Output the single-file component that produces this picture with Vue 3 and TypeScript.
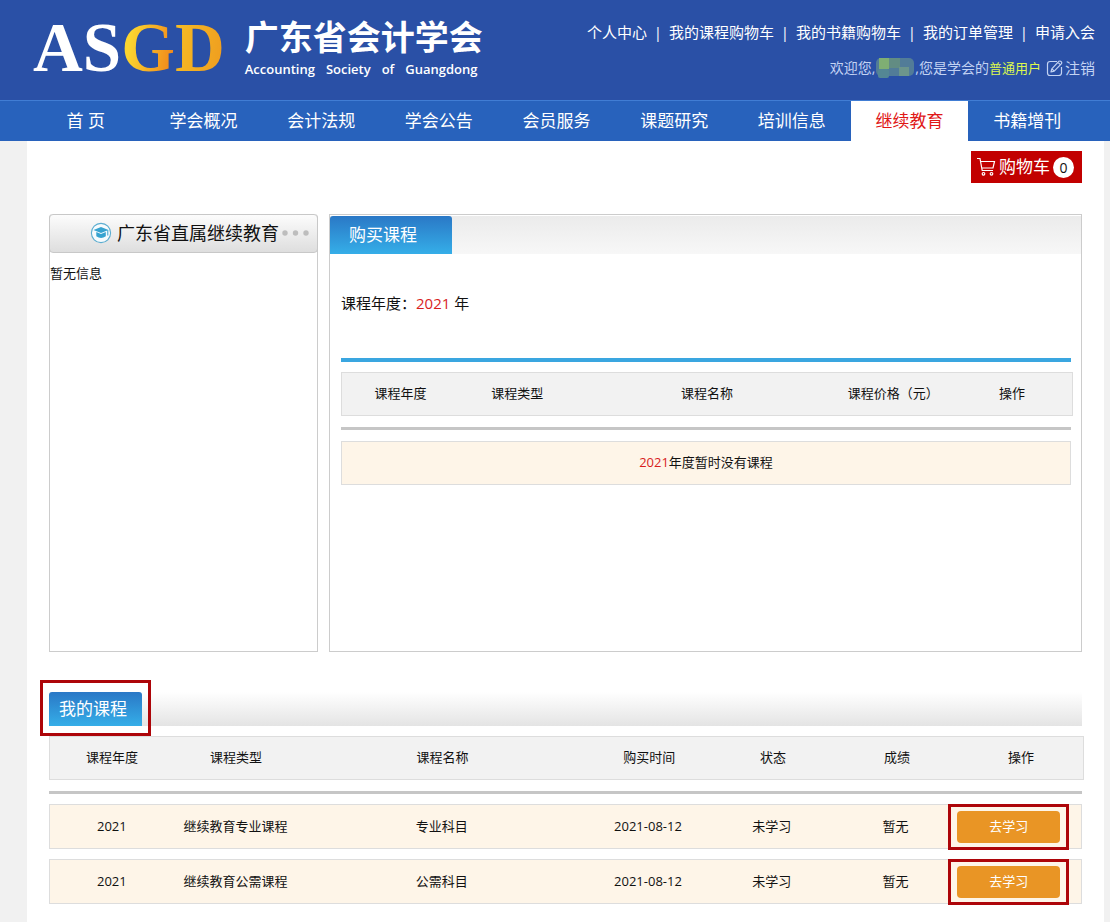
<script setup lang="ts">
interface Course {
  year: string
  type: string
  name: string
  date: string
  status: string
  score: string
}

const topLinks: string[] = ['个人中心', '我的课程购物车', '我的书籍购物车', '我的订单管理', '申请入会']
const navItems: string[] = ['首 页', '学会概况', '会计法规', '学会公告', '会员服务', '课题研究', '培训信息', '继续教育', '书籍增刊']
const activeNav = '继续教育'
const englishName: string[] = ['Accounting', 'Society', 'of', 'Guangdong']
const buyColumns: string[] = ['课程年度', '课程类型', '课程名称', '课程价格（元）', '操作']
const myColumns: string[] = ['课程年度', '课程类型', '课程名称', '购买时间', '状态', '成绩', '操作']
const courses: Course[] = [
  { year: '2021', type: '继续教育专业课程', name: '专业科目', date: '2021-08-12', status: '未学习', score: '暂无' },
  { year: '2021', type: '继续教育公需课程', name: '公需科目', date: '2021-08-12', status: '未学习', score: '暂无' },
]
</script>

<template>
  <div class="page">
    <header class="banner">
      <div class="brand">
        <div class="mark" aria-label="ASGD"><span>AS</span><span class="gold-g">G</span><span class="gold-d">D</span></div>
        <div class="names">
          <div class="cn">广东省会计学会</div>
          <div class="en"><span v-for="word in englishName" :key="word">{{ word }}</span></div>
        </div>
      </div>
      <div class="account">
        <div class="links">
          <template v-for="(link, i) in topLinks" :key="link">
            <span v-if="i > 0" class="sep">|</span>
            <a href="#">{{ link }}</a>
          </template>
        </div>
        <div class="welcome">
          <span>欢迎您,</span>
          <svg class="masked" width="40" height="20" viewBox="0 0 40 20" aria-hidden="true">
            <rect x="1" y="0" width="38" height="18" rx="5" fill="#527c98" />
            <rect x="4" y="0" width="10" height="11" fill="#7fae73" />
            <rect x="14" y="0" width="11" height="10" fill="#628c83" />
            <rect x="3" y="11" width="11" height="9" rx="2" fill="#548794" />
            <rect x="24" y="9" width="10" height="9" fill="#6c958c" />
          </svg>
          <span>,您是学会的</span><span class="level">普通用户</span>
          <a href="#" class="logout">
            <svg width="17" height="17" viewBox="0 0 17 17" fill="none" stroke="currentColor" stroke-width="1.2" stroke-linejoin="round" aria-hidden="true">
              <path d="M11 1.5H4Q1.5 1.5 1.5 4V13Q1.5 15.5 4 15.5H12.5Q15.5 15.5 15.5 13V7" />
              <path d="M5 12L5.8 8.8L13 1.2Q14.2 .6 15.2 1.7Q16.2 2.8 15.3 3.8L8.2 11.1ZM5.8 8.8L8.2 11.1M12 2.4L14.3 4.7" />
            </svg>注销</a>
        </div>
      </div>
    </header>

    <nav class="nav">
      <a v-for="item in navItems" :key="item" href="#" :class="{ active: item === activeNav }">{{ item }}</a>
    </nav>

    <main class="main">
      <button type="button" class="cart">
        <svg width="20" height="20" viewBox="0 0 20 20" fill="none" stroke="currentColor" stroke-width="1.2" aria-hidden="true">
          <path d="M1 1.5H4L6.2 13.5H17M4.6 4.5H18.5L17 11H5.7" />
          <circle cx="7.5" cy="16.8" r="1.3" />
          <circle cx="15.5" cy="16.8" r="1.3" />
        </svg>
        <span>购物车</span><span class="count">0</span>
      </button>

      <div class="panels">
        <section class="side">
          <h2 class="side-title">
            <svg width="22" height="22" viewBox="0 0 22 22" aria-hidden="true">
              <circle cx="11" cy="11" r="9.6" fill="#f7fbfd" stroke="#5badd0" stroke-width="1.1" />
              <path d="M3.5 8L11 5L18.5 8L11 11Z M6.3 10L11 12L15.8 10V14.2Q11 17.6 6.3 14.2Z" fill="#37a3d0" />
              <path d="M17.8 8V13.5" stroke="#37a3d0" stroke-width="1" />
            </svg>
            <span>广东省直属继续教育</span>
            <svg width="28" height="8" viewBox="0 0 28 8" fill="#bdbdbd" aria-hidden="true">
              <circle cx="4" cy="4" r="2.7" /><circle cx="14.5" cy="4" r="2.7" /><circle cx="25" cy="4" r="2.7" />
            </svg>
          </h2>
          <p class="side-empty">暂无信息</p>
        </section>

        <section class="buy">
          <div class="buy-bar"><h2 class="tab">购买课程</h2></div>
          <div class="buy-body">
            <p class="year">课程年度：<span class="red">2021</span> 年</p>
            <table class="grid buy-grid">
              <thead>
                <tr><th v-for="c in buyColumns" :key="c" scope="col">{{ c }}</th></tr>
              </thead>
              <tbody>
                <tr class="empty"><td colspan="5"><span class="red">2021</span>年度暂时没有课程</td></tr>
              </tbody>
            </table>
          </div>
        </section>
      </div>

      <section class="mine">
        <div class="mine-bar"><h2 class="tab marked">我的课程</h2></div>
        <table class="grid my-grid">
          <thead>
            <tr><th v-for="c in myColumns" :key="c" scope="col">{{ c }}</th></tr>
          </thead>
          <tbody>
            <tr v-for="course in courses" :key="course.type">
              <td>{{ course.year }}</td>
              <td>{{ course.type }}</td>
              <td>{{ course.name }}</td>
              <td>{{ course.date }}</td>
              <td>{{ course.status }}</td>
              <td>{{ course.score }}</td>
              <td class="action"><button type="button" class="study marked">去学习</button></td>
            </tr>
          </tbody>
        </table>
      </section>
    </main>
  </div>
</template>

<style>
body {
  background: #f1f1f1;
}
</style>

<style scoped>
.page {
  display: flex;
  flex-direction: column;
  min-height: 100vh;
  font: 13px/20px "Open Sans", "Noto Sans CJK SC", sans-serif;
  color: #111;
}
.page * {
  box-sizing: border-box;
}
h2, p {
  margin: 0;
  font-weight: 400;
}
a {
  color: inherit;
  text-decoration: none;
}
button {
  border: 0;
  padding: 0;
  font: inherit;
  cursor: pointer;
}
.red {
  color: #d81e1e;
}
.banner {
  display: flex;
  justify-content: space-between;
  height: 100px;
  padding: 0 15px 0 33px;
  background: #2a50a6;
  color: #fff;
}
.brand {
  display: flex;
  gap: 20px;
}
.mark {
  display: flex;
  margin-top: 12px;
  font: 700 69px/72px "Liberation Serif", serif;
}
.gold-g, .gold-d {
  background: linear-gradient(100deg, #fbd52f 20%, #f18a1b 85%);
  background-clip: text;
  -webkit-background-clip: text;
  color: transparent;
}
.gold-d {
  background-image: linear-gradient(100deg, #f6be25, #ee981e);
}
.names {
  padding-top: 12px;
}
.cn {
  font: 700 34px/48px "Noto Sans CJK SC", sans-serif;
}
.en {
  display: flex;
  gap: 11px;
  font-size: 13px;
  font-weight: 600;
  line-height: 18px;
}
.account {
  padding-top: 22px;
  font-size: 15px;
}
.links, .welcome {
  display: flex;
  align-items: center;
  justify-content: flex-end;
  white-space: nowrap;
}
.links {
  line-height: 20px;
}
.sep {
  width: 22px;
  text-align: center;
}
.welcome {
  margin-top: 16px;
  color: #c3d3f3;
  font-size: 14px;
}
.welcome .level {
  font-size: 13px;
  color: #dcf84e;
}
.logout {
  display: flex;
  align-items: center;
  gap: 2px;
  margin-left: 5px;
  font-size: 15px;
}
.nav {
  display: grid;
  grid-template-columns: repeat(9, 1fr);
  padding: 0 24px 0 27px;
  border-top: 1px solid #417dd4;
  background: #2862bc;
}
.nav a {
  color: #fff;
  font-size: 17px;
  line-height: 40px;
  text-align: center;
}
.nav .active {
  background: #fff;
  color: #e01818;
}
.main {
  flex: 1;
  margin: 0 6px 0 27px;
  padding: 10px 22px 18px;
  background: #fff;
}
.cart {
  display: flex;
  align-items: center;
  gap: 3px;
  height: 32px;
  margin-left: auto;
  padding: 0 8px 0 5px;
  background: #c20000;
  color: #fff;
  font-size: 17px;
}
.count {
  width: 21px;
  border-radius: 50%;
  background: #fff;
  color: #111;
  font-size: 14px;
  line-height: 21px;
}
.panels {
  display: grid;
  grid-template-columns: 269px 1fr;
  gap: 11px;
  min-height: 438px;
  margin-top: 31px;
}
.side, .buy {
  border: 1px solid #ccc;
}
.side {
  border-top: 0;
  border-radius: 4px 4px 0 0;
}
.side-title {
  display: flex;
  align-items: center;
  justify-content: flex-end;
  height: 39px;
  margin: 0 -1px;
  padding: 0 8px 1px 0;
  border: 1px solid #c8c8c8;
  border-radius: 4px;
  background: linear-gradient(#fcfcfc, #dedede);
  font-size: 18px;
}
.side-title span {
  margin: 0 2px 0 5px;
}
.side-empty {
  margin-top: 10px;
}
.buy {
  padding-top: 1px;
}
.buy-bar {
  background: linear-gradient(#ebebeb, #f7f7f7);
}
.tab {
  width: 122px;
  padding-left: 19px;
  border-radius: 3px 3px 0 0;
  background: linear-gradient(#2a78c6, #35aee8);
  color: #fff;
  font-size: 17px;
  line-height: 38px;
}
.buy-body {
  padding: 39px 10px 0 11px;
}
.year {
  padding-bottom: 45px;
  border-bottom: 4px solid #3aa6e0;
  font-size: 15px;
}
.grid {
  display: block;
  margin-top: 10px;
}
.grid thead, .grid tbody {
  display: block;
}
.grid tr {
  display: grid;
  align-items: center;
  min-height: 44px;
  border: 1px solid #ddd;
}
.grid thead tr {
  margin-right: -2px;
  background: #f2f2f2;
}
.grid th, .grid td {
  padding: 0 0 2px;
  font-weight: 400;
  text-align: center;
}
.grid tbody {
  margin-top: 11px;
  padding-top: 10px;
  border-top: 3px solid #c6c6c6;
}
.grid tbody tr {
  background: #fef5e8;
}
.grid tbody tr + tr {
  margin-top: 10px;
}
.buy-grid tr {
  grid-template-columns: 16fr 16fr 36fr 15fr 17fr;
}
.buy-grid th:last-child {
  padding-left: 4px;
}
.buy-grid tbody {
  padding-top: 11px;
}
.grid .empty {
  grid-template-columns: 1fr;
}
.my-grid tr {
  grid-template-columns: 12fr 12fr 28fr 12fr 12fr 12fr 12fr;
}
.my-grid tbody tr {
  min-height: 45px;
}
.mine {
  margin-top: 40px;
}
.mine-bar {
  background: linear-gradient(#fff, #e4e4e4);
}
.mine-bar .tab {
  width: 93px;
  padding-left: 10px;
  line-height: 34px;
}
.marked {
  position: relative;
}
.marked::after {
  content: "";
  position: absolute;
  inset: -12px -9px -10px;
  border: 3px solid #ad0509;
}
.grid .action {
  padding: 0;
  text-align: left;
}
.study {
  width: 103px;
  padding-bottom: 2px;
  border-radius: 4px;
  background: #e99525;
  color: #fff;
  line-height: 30px;
}
.study::after {
  inset: -7px -9px;
}
</style>
